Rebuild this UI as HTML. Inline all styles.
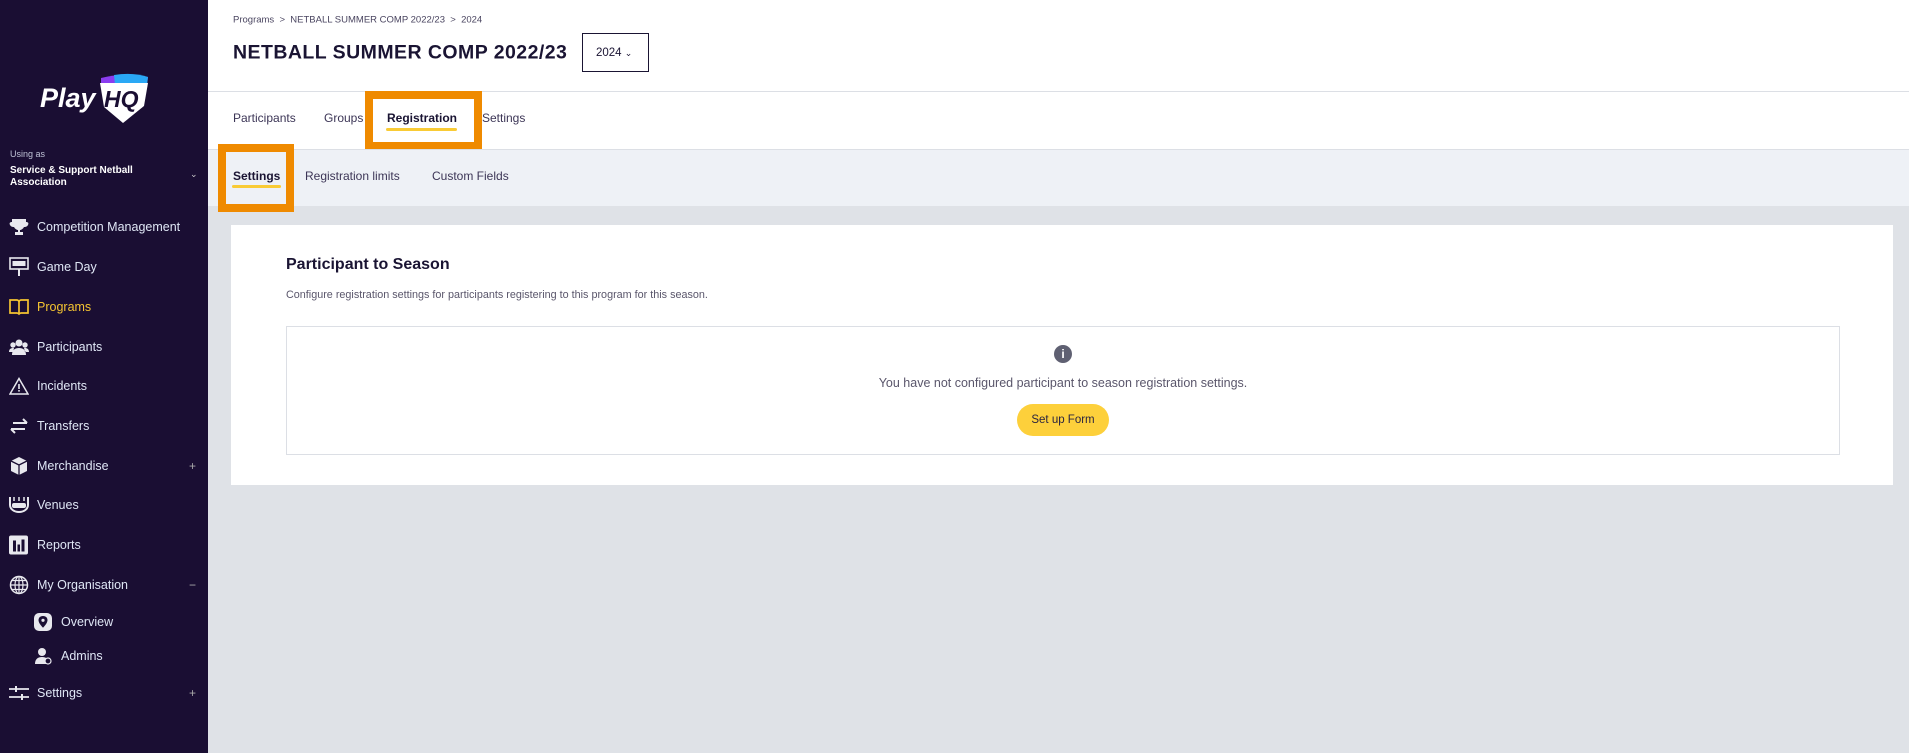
<!DOCTYPE html>
<html><head><meta charset="utf-8"><style>
*{margin:0;padding:0;box-sizing:border-box}
body{width:1909px;height:753px;overflow:hidden;background:#dfe2e7;font-family:"Liberation Sans",sans-serif;position:relative}
.abs{position:absolute}
#side{left:0;top:0;width:208px;height:753px;background:#1a0e33}
.nav{position:absolute;left:37px;font-size:12.5px;color:#dfe6f5;white-space:nowrap;transform:translateY(-50%)}
.ic{position:absolute;left:9px;transform:translateY(-50%)}
.pl{position:absolute;left:189px;color:#aaa;font-size:12px;transform:translateY(-50%)}
#hdr{left:208px;top:0;width:1701px;height:149px;background:#fff}
.t{position:absolute;font-size:12px;color:#3c3556;transform:translateY(-50%);white-space:nowrap}
</style></head><body>
<div id="side" class="abs">
  <svg class="abs" style="left:38px;top:70px" width="115" height="58" viewBox="0 0 115 58">
    <text x="2" y="37" font-family="Liberation Sans" font-weight="bold" font-style="italic" font-size="27" fill="#fff">Play</text>
    <path d="M63 8 Q86 2 110 7 L109 15 L63 15Z" fill="#8a3cf0"/>
    <path d="M76 5 Q95 2 110 7 L109 15 L77 15Z" fill="#2aa8f5"/>
    <path d="M62 13 L110 13 L106 36 L85 53 L66 37 Z" fill="#fff"/>
    <text x="66" y="37" font-family="Liberation Sans" font-weight="bold" font-style="italic" font-size="23" fill="#1a0e33">HQ</text>
  </svg>
  <div class="abs" style="left:10px;top:149px;font-size:9px;color:#bfc3d6">Using as</div>
  <div class="abs" style="left:10px;top:165px;font-size:10px;font-weight:bold;color:#fff;line-height:12px">Service &amp; Support Netball<br>Association</div>
  <div class="abs" style="left:190px;top:169px;font-size:9px;color:#ccc">&#8964;</div>

  <svg class="ic" style="top:227px" width="20" height="18" viewBox="0 0 20 18"><path d="M3 1h14v3c2 0 3 1 2 3-1 2-3 2-4 2-1 2-3 3-4 3v2h3v3H6v-3h3v-2c-1 0-3-1-4-3-1 0-3 0-4-2-1-2 0-3 2-3z" fill="#e8e8ee"/></svg>
  <div class="nav" style="top:227px">Competition Management</div>
  <svg class="ic" style="top:267px" width="20" height="20" viewBox="0 0 20 20"><rect x="1" y="1" width="18" height="11" fill="none" stroke="#e8e8ee" stroke-width="1.6"/><rect x="3.5" y="4" width="13" height="5" fill="#e8e8ee"/><rect x="9" y="12" width="2" height="7" fill="#e8e8ee"/></svg>
  <div class="nav" style="top:267px">Game Day</div>
  <svg class="ic" style="top:307px" width="20" height="18" viewBox="0 0 20 18"><path d="M1 2h7c1 0 2 1 2 2 0-1 1-2 2-2h7v13h-7c-1 0-2 1-2 1 0 0-1-1-2-1H1z M10 4v12" fill="none" stroke="#f5c431" stroke-width="1.7"/></svg>
  <div class="nav" style="top:307px;color:#f5c431">Programs</div>
  <svg class="ic" style="top:347px" width="20" height="18" viewBox="0 0 20 18"><circle cx="10" cy="5" r="3.5" fill="#e8e8ee"/><circle cx="4" cy="7" r="2.7" fill="#e8e8ee"/><circle cx="16" cy="7" r="2.7" fill="#e8e8ee"/><path d="M3 17c0-5 3-7 7-7s7 2 7 7z M0 14c0-3 2-4 4-4l1 0-1 4z M20 14c0-3-2-4-4-4l-1 0 1 4z" fill="#e8e8ee"/></svg>
  <div class="nav" style="top:347px">Participants</div>
  <svg class="ic" style="top:386px" width="20" height="18" viewBox="0 0 20 18"><path d="M10 1.5 L19 17 H1Z" fill="none" stroke="#e8e8ee" stroke-width="1.5"/><rect x="9.2" y="7" width="1.6" height="5" fill="#e8e8ee"/><rect x="9.2" y="13" width="1.6" height="1.6" fill="#e8e8ee"/></svg>
  <div class="nav" style="top:386px">Incidents</div>
  <svg class="ic" style="top:426px" width="20" height="16" viewBox="0 0 20 16"><path d="M4 5h14M14 1l4 4M2 11h14M6 15l-4-4" fill="none" stroke="#e8e8ee" stroke-width="2"/></svg>
  <div class="nav" style="top:426px">Transfers</div>
  <svg class="ic" style="top:466px" width="20" height="20" viewBox="0 0 20 20"><path d="M10 1l8 4v10l-8 4-8-4V5z" fill="#e8e8ee"/><path d="M2 5l8 4 8-4M10 9v10" stroke="#1a0e33" stroke-width="1.3" fill="none"/></svg>
  <div class="nav" style="top:466px">Merchandise</div><div class="pl" style="top:466px">+</div>
  <svg class="ic" style="top:505px" width="20" height="18" viewBox="0 0 20 18"><path d="M1 1v8c0 4 4 7 9 7s9-3 9-7V1" fill="none" stroke="#e8e8ee" stroke-width="2"/><rect x="3" y="7" width="14" height="5" rx="2" fill="#e8e8ee"/><path d="M5 1v4M10 1v4M15 1v4" stroke="#e8e8ee" stroke-width="1.5"/></svg>
  <div class="nav" style="top:505px">Venues</div>
  <svg class="ic" style="top:545px" width="19" height="19" viewBox="0 0 19 19"><rect x="0" y="0" width="19" height="19" rx="2" fill="#e8e8ee"/><rect x="4" y="5" width="3" height="11" fill="#1a0e33"/><rect x="8.5" y="9" width="2.5" height="7" fill="#1a0e33"/><rect x="12.5" y="4" width="3" height="12" fill="#1a0e33"/></svg>
  <div class="nav" style="top:545px">Reports</div>
  <svg class="ic" style="top:585px" width="20" height="20" viewBox="0 0 20 20"><circle cx="10" cy="10" r="8.5" fill="none" stroke="#e8e8ee" stroke-width="1.5"/><ellipse cx="10" cy="10" rx="4" ry="8.5" fill="none" stroke="#e8e8ee" stroke-width="1.2"/><path d="M1.5 10h17M3 5.5h14M3 14.5h14M10 1.5v17" stroke="#e8e8ee" stroke-width="1.2"/></svg>
  <div class="nav" style="top:585px">My Organisation</div><div class="pl" style="top:585px">&minus;</div>
  <svg class="ic" style="top:622px;left:34px" width="18" height="18" viewBox="0 0 18 18"><rect width="18" height="18" rx="5" fill="#e8e8ee"/><path d="M9 3c-3 0-4.5 2-4.5 4.2 0 3 4.5 7.5 4.5 7.5s4.5-4.5 4.5-7.5C13.5 5 12 3 9 3z" fill="#1a0e33"/><circle cx="9" cy="7.3" r="1.6" fill="#e8e8ee"/></svg>
  <div class="nav" style="top:622px;left:61px">Overview</div>
  <svg class="ic" style="top:656px;left:35px" width="17" height="18" viewBox="0 0 17 18"><circle cx="7" cy="5" r="4" fill="#e8e8ee"/><path d="M0 17c0-5 3-7 7-7s7 2 7 7z" fill="#e8e8ee"/><circle cx="13" cy="14" r="3" fill="#1a0e33" stroke="#e8e8ee" stroke-width="1.2"/></svg>
  <div class="nav" style="top:656px;left:61px">Admins</div>
  <svg class="ic" style="top:693px" width="20" height="14" viewBox="0 0 20 14"><path d="M0 3h20M0 11h20" stroke="#e8e8ee" stroke-width="1.8"/><path d="M7 0v6M13 8v6" stroke="#e8e8ee" stroke-width="2"/></svg>
  <div class="nav" style="top:693px">Settings</div><div class="pl" style="top:693px">+</div>
</div>
<div class="abs" style="left:208px;top:12px;width:3px;height:51px;background:#1a0e33"></div>

<div id="hdr" class="abs"></div>
<div class="abs" style="left:208px;top:91px;width:1701px;height:1px;background:#dcdfe5"></div>
<div class="t" style="left:233px;top:20px;font-size:9.5px;color:#4a4560">Programs &nbsp;&gt;&nbsp; NETBALL SUMMER COMP 2022/23 &nbsp;&gt;&nbsp; 2024</div>
<div class="t" style="left:233px;top:53px;font-size:19.5px;font-weight:bold;color:#1a1433;letter-spacing:0.45px">NETBALL SUMMER COMP 2022/23</div>
<div class="abs" style="left:582px;top:33px;width:67px;height:39px;border:1.5px solid #1a1433"></div>
<div class="t" style="left:596px;top:53px;font-size:11.5px;color:#1a1433">2024 <span style="font-size:9px">&#8964;</span></div>

<div class="t" style="left:233px;top:118px">Participants</div>
<div class="t" style="left:324px;top:118px">Groups</div>
<div class="t" style="left:387px;top:118px;font-weight:bold;color:#1a1433">Registration</div>
<div class="abs" style="left:386px;top:128px;width:71px;height:3px;background:#f9cb35;border-radius:2px"></div>
<div class="t" style="left:482px;top:118px">Settings</div>
<div class="abs" style="left:365px;top:91px;width:117px;height:59px;border:8px solid #ef8a00"></div>

<div class="abs" style="left:208px;top:149px;width:1701px;height:57px;background:#eef1f6;border-top:1px solid #dcdfe5"></div>
<div class="t" style="left:233px;top:176px;font-weight:bold;color:#1a1433">Settings</div>
<div class="abs" style="left:232px;top:185px;width:49px;height:3px;background:#f9cb35;border-radius:2px"></div>
<div class="t" style="left:305px;top:176px">Registration limits</div>
<div class="t" style="left:432px;top:176px">Custom Fields</div>
<div class="abs" style="left:218px;top:144px;width:76px;height:68px;border:8px solid #ef8a00"></div>

<div class="abs" style="left:231px;top:225px;width:1662px;height:260px;background:#fff"></div>
<div class="t" style="left:286px;top:265px;font-size:16px;font-weight:bold;color:#1a1433">Participant to Season</div>
<div class="t" style="left:286px;top:295px;font-size:10.8px;color:#5a566b">Configure registration settings for participants registering to this program for this season.</div>
<div class="abs" style="left:286px;top:326px;width:1554px;height:129px;border:1px solid #dcdfe5"></div>
<div class="abs" style="left:1054px;top:345px;width:18px;height:18px;border-radius:50%;background:#5f6072;color:#fff;font-size:12px;font-weight:bold;text-align:center;line-height:18px">i</div>
<div class="t" style="left:0;width:2126px;text-align:center;top:383px;font-size:12.5px;color:#5a566b">You have not configured participant to season registration settings.</div>
<div class="abs" style="left:1017px;top:404px;width:92px;height:32px;border-radius:16px;background:#fdd03b;color:#2a2440;font-size:11.5px;text-align:center;line-height:32px">Set up Form</div>
</body></html>
